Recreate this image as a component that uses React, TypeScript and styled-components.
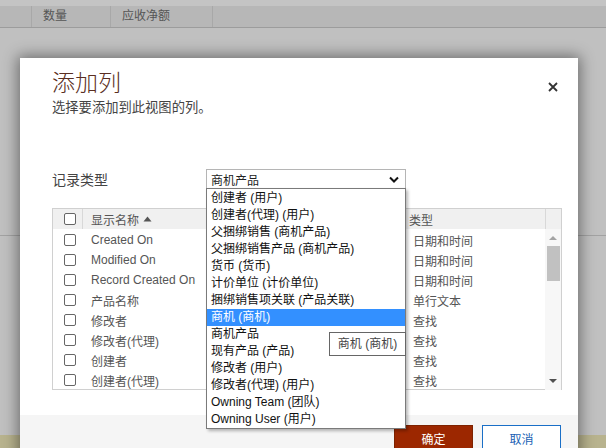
import styled, { createGlobalStyle } from "styled-components";

const GlobalStyle = createGlobalStyle`
  html, body {
    margin: 0;
    padding: 0;
    background: #c0c0c0;
  }
  body {
    font-family: "Segoe UI", "Liberation Sans", "Noto Sans CJK SC", sans-serif;
    font-size: 12px;
    color: #444;
  }
`;

const font = `"Segoe UI", "Liberation Sans", "Noto Sans CJK SC", sans-serif`;

const options = [
  "创建者 (用户)",
  "创建者(代理) (用户)",
  "父捆绑销售 (商机产品)",
  "父捆绑销售产品 (商机产品)",
  "货币 (货币)",
  "计价单位 (计价单位)",
  "捆绑销售项关联 (产品关联)",
  "商机 (商机)",
  "商机产品",
  "现有产品 (产品)",
  "修改者 (用户)",
  "修改者(代理) (用户)",
  "Owning Team (团队)",
  "Owning User (用户)",
];

const rows = [
  { name: "Created On", type: "日期和时间" },
  { name: "Modified On", type: "日期和时间" },
  { name: "Record Created On", type: "日期和时间" },
  { name: "产品名称", type: "单行文本" },
  { name: "修改者", type: "查找" },
  { name: "修改者(代理)", type: "查找" },
  { name: "创建者", type: "查找" },
  { name: "创建者(代理)", type: "查找" },
];

const Screen = styled.div`
  position: relative;
  width: 606px;
  height: 448px;
  overflow: hidden;
  background: #c0c0c0;
`;

const Backdrop = styled.div`
  display: flex;
  flex-direction: column;
  height: 100%;
`;

const TopStrip = styled.div`
  height: 6px;
  background: #c4c4c4;
`;

const GridHeader = styled.div`
  display: flex;
  height: 21px;
  background: #b7b7b7;
  border-bottom: 1px solid #9c9c9c;
`;

const GridHeadCell = styled.div<{ $w: number }>`
  width: ${({ $w }) => $w}px;
  box-sizing: border-box;
  padding-left: 11px;
  border-left: 1px solid #a8a8a8;
  font-size: 12px;
  line-height: 21px;
  color: #555;
`;

const GridLead = styled.div`
  width: 31px;
`;

const BackGap = styled.div`
  height: 207px;
`;

const BackLine = styled.div`
  height: 1px;
  background: #a2a2a2;
`;

const BackFill = styled.div`
  flex: 1;
`;

const Khaki = styled.div`
  height: 13px;
  background: #b8b38e;
`;

const Dialog = styled.div`
  position: absolute;
  left: 20px;
  top: 58px;
  width: 558px;
  height: 400px;
  background: #fff;
  box-shadow: 0 0 14px 2px rgba(0, 0, 0, 0.45);
  display: flex;
  flex-direction: column;
`;

const Header = styled.div`
  padding: 10px 32px 0;
`;

const Title = styled.h1`
  margin: 0;
  font-family: ${font};
  font-weight: 300;
  font-size: 23px;
  line-height: 30px;
  color: #5a2e22;
`;

const Subtitle = styled.div`
  font-size: 13.3px;
  line-height: 20px;
  color: #444;
`;

const Close = styled.button`
  position: absolute;
  right: 18px;
  top: 22px;
  width: 14px;
  height: 14px;
  padding: 0;
  border: 0;
  background: transparent;
  display: flex;
  align-items: center;
  justify-content: center;
`;

const Body = styled.div`
  flex: 1;
  padding: 51px 16px 0 32px;
  display: flex;
  flex-direction: column;
`;

const FieldRow = styled.div`
  display: flex;
  align-items: center;
  height: 19px;
`;

const FieldLabel = styled.div`
  width: 154px;
  font-size: 14px;
  color: #444;
`;

const SelectWrap = styled.div`
  position: relative;
  width: 200px;
  height: 19px;
`;

const SelectBox = styled.div`
  box-sizing: border-box;
  height: 19px;
  border: 1px solid #b5b5b5;
  border-bottom: 0;
  display: flex;
  align-items: center;
  justify-content: space-between;
  padding: 0 6px 0 4px;
  font-size: 12px;
  color: #222;
  background: #fff;
`;

const DropList = styled.ul`
  position: absolute;
  left: 0;
  top: 19px;
  z-index: 5;
  box-sizing: border-box;
  width: 200px;
  margin: 0;
  padding: 1px 0 0;
  list-style: none;
  background: #fff;
  border: 1px solid #7a7a7a;
  box-shadow: 2px 2px 3px rgba(0, 0, 0, 0.28);
`;

const DropItem = styled.li<{ $active?: boolean }>`
  height: 17px;
  line-height: 17px;
  padding-left: 4px;
  font-size: 12px;
  white-space: nowrap;
  color: ${({ $active }) => ($active ? "#fff" : "#111")};
  background: ${({ $active }) => ($active ? "#3390ff" : "transparent")};
`;

const Tip = styled.div`
  position: absolute;
  left: 123px;
  top: 163px;
  z-index: 6;
  box-sizing: border-box;
  width: 77px;
  height: 24px;
  border: 1px solid #666;
  background: #fff;
  font-size: 12px;
  line-height: 22px;
  text-align: center;
  color: #444;
`;

const Table = styled.div`
  margin-top: 20px;
  width: 510px;
  height: 182px;
  box-sizing: border-box;
  border: 1px solid #d0d0d0;
  display: grid;
  grid-template-columns: 1fr 16px;
  grid-template-rows: 20px 1fr;
`;

const HeadRow = styled.div`
  display: grid;
  grid-template-columns: 29px 323px 1fr;
  align-items: center;
  background: #f0f0f0;
  font-size: 12px;
  color: #555;
`;

const HeadCell = styled.div<{ $divider?: boolean }>`
  height: 20px;
  display: flex;
  align-items: center;
  gap: 4px;
  padding-left: ${({ $divider }) => ($divider ? "8px" : "4px")};
  border-left: ${({ $divider }) => ($divider ? "1px solid #d8d8d8" : "0")};
  box-sizing: border-box;
`;

const HeadCorner = styled.div`
  background: #f0f0f0;
  border-left: 1px solid #d8d8d8;
`;

const Rows = styled.div`
  display: flex;
  flex-direction: column;
  padding-top: 1px;
`;

const Row = styled.div`
  display: grid;
  grid-template-columns: 29px 323px 1fr;
  align-items: center;
  height: 20px;
  font-size: 12px;
  color: #555;
`;

const CheckCell = styled.div`
  display: flex;
  justify-content: flex-end;
  padding-right: 6px;
`;

const Check = styled.span`
  display: block;
  width: 10px;
  height: 10px;
  border: 1px solid #666;
  border-radius: 2px;
  background: #fff;
`;

const Cell = styled.div<{ $pad: number }>`
  padding-left: ${({ $pad }) => $pad}px;
  white-space: nowrap;
`;

const Scroll = styled.div`
  position: relative;
  background: #f7f7f7;
  display: flex;
  flex-direction: column;
  align-items: center;
`;

const ArrowUp = styled.div`
  margin-top: 7px;
  width: 0;
  height: 0;
  border-left: 4px solid transparent;
  border-right: 4px solid transparent;
  border-bottom: 4px solid #a3a3a3;
`;

const Thumb = styled.div`
  margin-top: 6px;
  width: 13px;
  height: 35px;
  background: #c1c1c1;
`;

const ArrowDown = styled.div`
  position: absolute;
  bottom: 7px;
  width: 0;
  height: 0;
  border-left: 4px solid transparent;
  border-right: 4px solid transparent;
  border-top: 4px solid #505050;
`;

const Footer = styled.div`
  height: 43px;
  margin-top: 24px;
  background: #f5f5f5;
  display: flex;
  justify-content: flex-end;
  gap: 9px;
  padding: 10px 17px 0 0;
  box-sizing: border-box;
`;

const Button = styled.button<{ $primary?: boolean }>`
  width: 79px;
  height: 26px;
  box-sizing: border-box;
  font-family: ${font};
  font-size: 12px;
  cursor: pointer;
  border: 1px solid ${({ $primary }) => ($primary ? "#7d2200" : "#1a6fc7")};
  background: ${({ $primary }) => ($primary ? "#9c2700" : "#fff")};
  color: ${({ $primary }) => ($primary ? "#fff" : "#1a5fb4")};
`;

export default function App() {
  return (
    <>
      <GlobalStyle />
      <Screen>
        <Backdrop>
          <TopStrip />
          <GridHeader>
            <GridLead />
            <GridHeadCell $w={79}>数量</GridHeadCell>
            <GridHeadCell $w={102}>应收净额</GridHeadCell>
            <GridHeadCell $w={1} />
          </GridHeader>
          <BackGap />
          <BackLine />
          <BackFill />
          <Khaki />
        </Backdrop>

        <Dialog>
          <Header>
            <Title>添加列</Title>
            <Subtitle>选择要添加到此视图的列。</Subtitle>
          </Header>
          <Close aria-label="关闭">
            <svg width="10" height="10" viewBox="0 0 10 10">
              <path d="M1 1 L9 9 M9 1 L1 9" stroke="#333" strokeWidth="1.8" />
            </svg>
          </Close>

          <Body>
            <FieldRow>
              <FieldLabel>记录类型</FieldLabel>
              <SelectWrap>
                <SelectBox>
                  <span>商机产品</span>
                  <svg width="10" height="7" viewBox="0 0 10 7">
                    <path d="M1 1.5 L5 5.5 L9 1.5" fill="none" stroke="#111" strokeWidth="2" />
                  </svg>
                </SelectBox>
                <DropList>
                  {options.map((o, i) => (
                    <DropItem key={o} $active={i === 7}>
                      {o}
                    </DropItem>
                  ))}
                </DropList>
                <Tip>商机 (商机)</Tip>
              </SelectWrap>
            </FieldRow>

            <Table>
              <HeadRow>
                <CheckCell>
                  <Check />
                </CheckCell>
                <HeadCell $divider>
                  显示名称
                  <svg width="9" height="6" viewBox="0 0 9 6">
                    <path d="M0.5 5.5 L4.5 0.5 L8.5 5.5 Z" fill="#555" />
                  </svg>
                </HeadCell>
                <HeadCell>类型</HeadCell>
              </HeadRow>
              <HeadCorner />
              <Rows>
                {rows.map((r) => (
                  <Row key={r.name}>
                    <CheckCell>
                      <Check />
                    </CheckCell>
                    <Cell $pad={9}>{r.name}</Cell>
                    <Cell $pad={8}>{r.type}</Cell>
                  </Row>
                ))}
              </Rows>
              <Scroll>
                <ArrowUp />
                <Thumb />
                <ArrowDown />
              </Scroll>
            </Table>
          </Body>

          <Footer>
            <Button $primary>确定</Button>
            <Button>取消</Button>
          </Footer>
        </Dialog>
      </Screen>
    </>
  );
}
